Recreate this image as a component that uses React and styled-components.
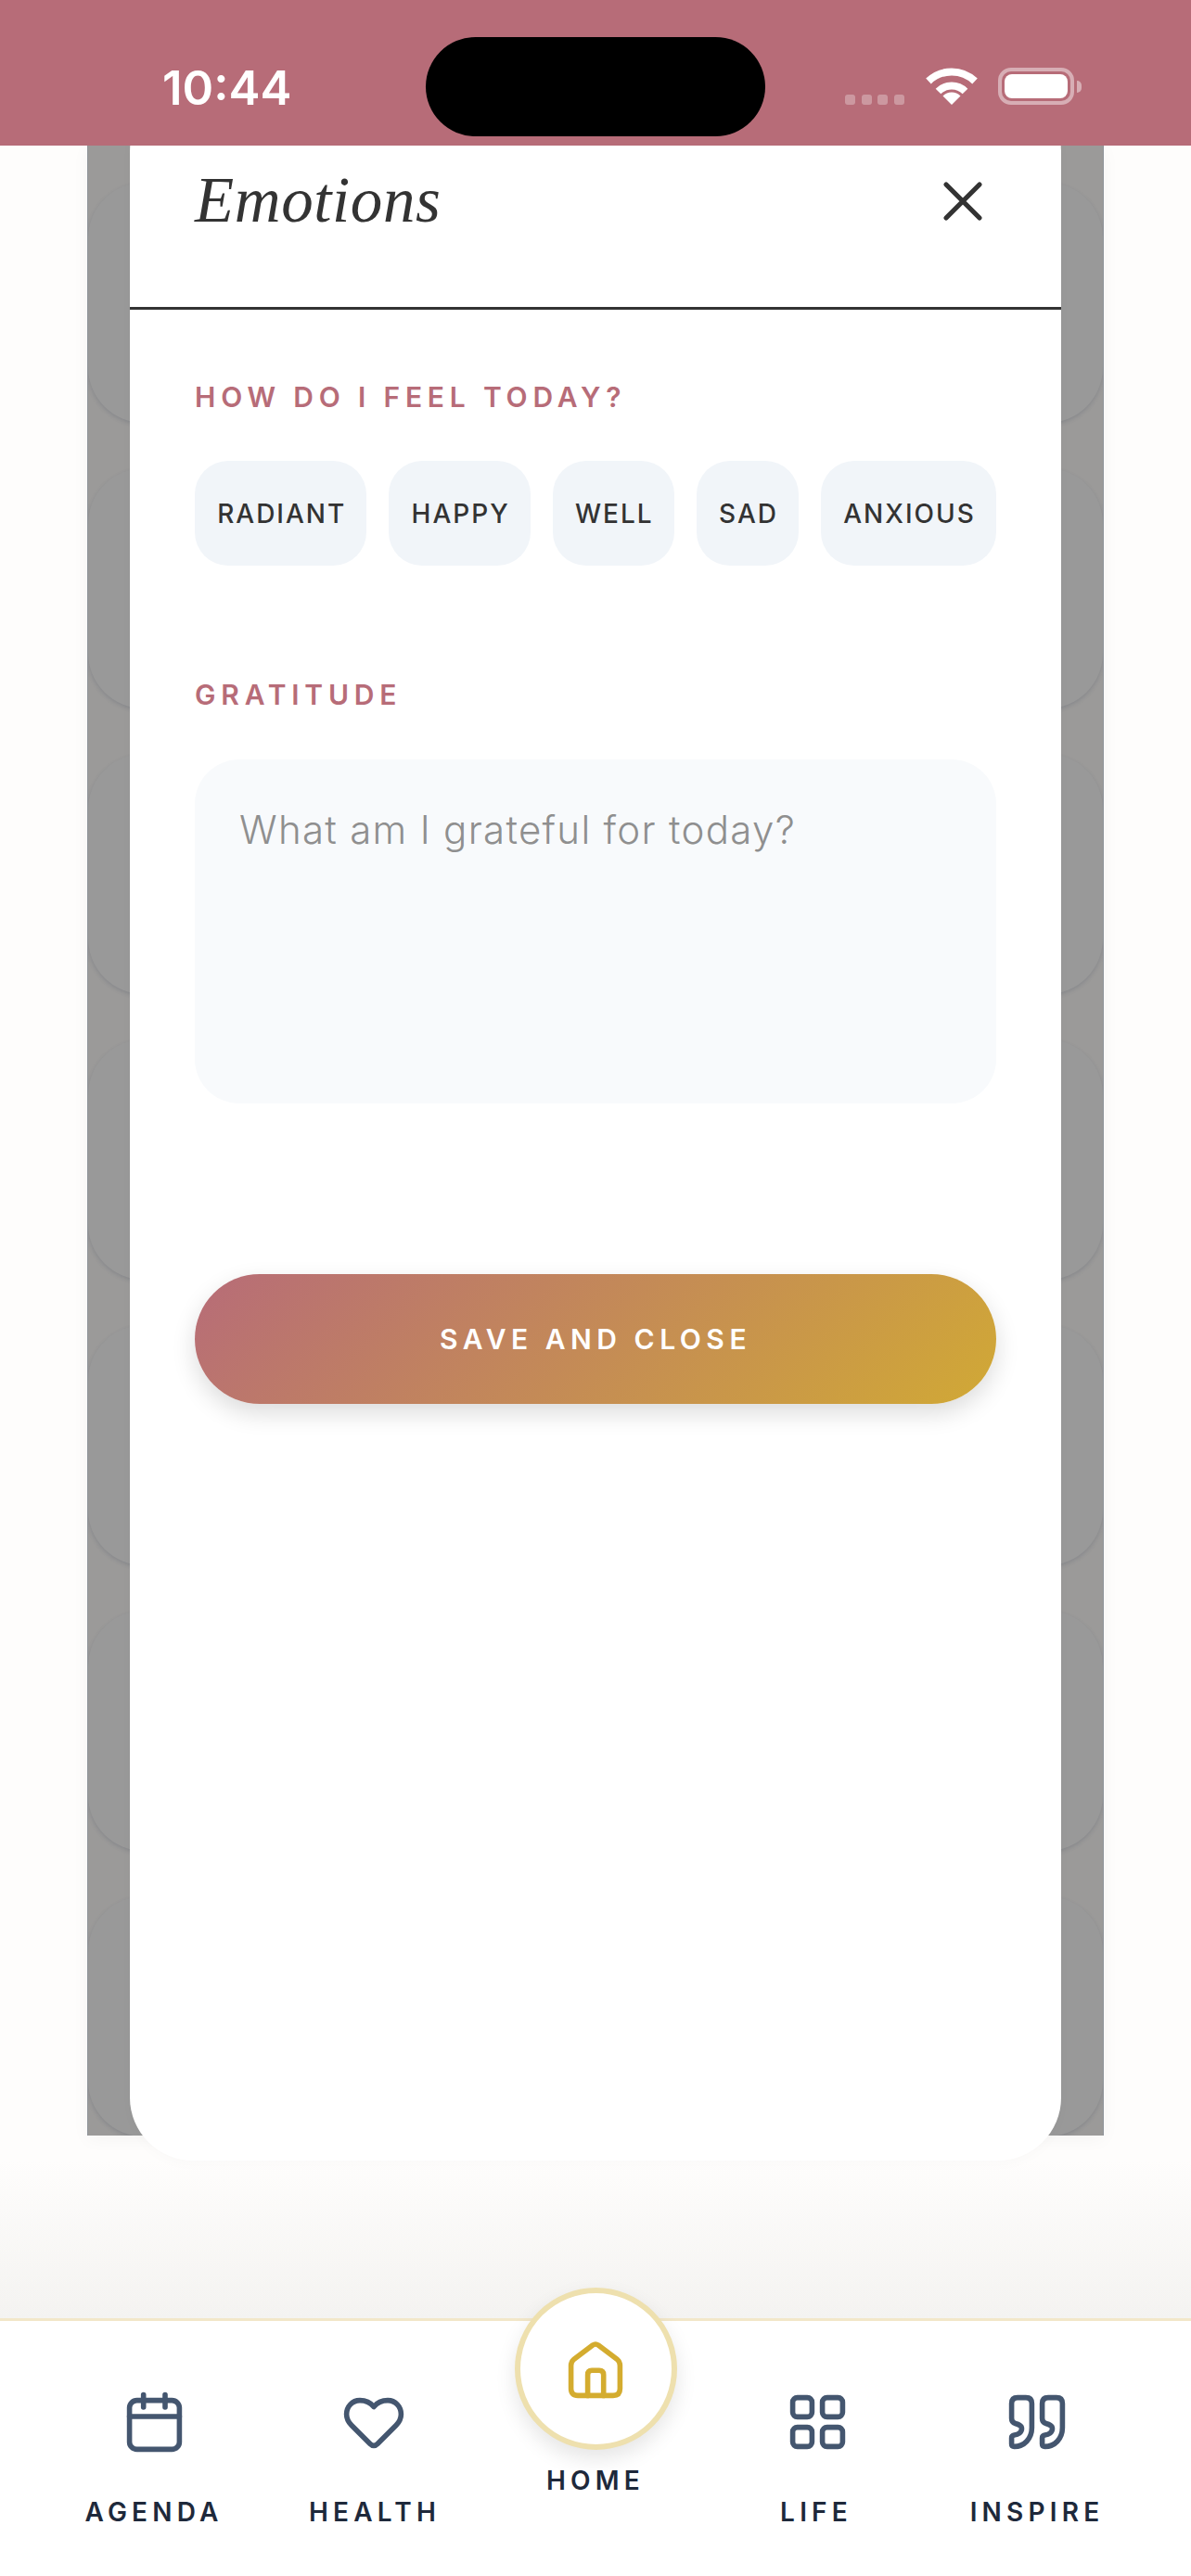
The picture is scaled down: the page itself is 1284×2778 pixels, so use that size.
import React from "react";
import styled, { createGlobalStyle } from "styled-components";

const GlobalStyle = createGlobalStyle`
  body {
    margin: 0;
    background: #fefdfc;
    font-family: "Inter", "Open Sans", sans-serif;
  }
`;

const Page = styled.div`
  width: 1284px;
  height: 2778px;
  display: flex;
  flex-direction: column;
  overflow: hidden;
`;

const StatusBar = styled.header`
  position: relative;
  z-index: 3;
  height: 157px;
  flex: none;
  background: #b76c78;
  display: grid;
  grid-template-columns: 459px 366px 1fr;
`;

const Time = styled.div`
  padding: 70px 0 0 175px;
  font-size: 51px;
  line-height: 50px;
  font-weight: 600;
  color: #fff;
`;

const Island = styled.div`
  margin-top: 40px;
  height: 107px;
  border-radius: 54px;
  background: #000;
`;

const StatusIcons = styled.div`
  padding: 73px 0 0 86px;
  display: flex;
  align-items: flex-start;
`;

const SignalDots = styled.div`
  display: flex;
  gap: 6.5px;
  margin-top: 29px;
  span {
    width: 11px;
    height: 11px;
    border-radius: 3px;
    background: rgba(255, 255, 255, 0.3);
  }
`;

const Wifi = styled.svg`
  width: 56px;
  height: 40px;
  margin: 0 22px 0 23px;
  fill: none;
  stroke: #fff;
`;

const Battery = styled.div`
  position: relative;
  box-sizing: border-box;
  width: 82px;
  height: 40px;
  padding: 3px;
  border: 4px solid rgba(255, 255, 255, 0.45);
  border-radius: 14px;
  &::after {
    content: "";
    position: absolute;
    left: 81px;
    top: 10px;
    width: 5px;
    height: 13px;
    border-radius: 0 7px 7px 0;
    background: rgba(255, 255, 255, 0.45);
  }
`;

const BatteryFill = styled.div`
  height: 100%;
  border-radius: 8px;
  background: #fff;
`;

const Content = styled.main`
  position: relative;
  flex: 1;
  padding: 0 94px;
  background: linear-gradient(to top, #f4f3f1 0, #fefdfc 170px);
`;

const Scrim = styled.div`
  box-sizing: border-box;
  height: 2146px;
  padding-top: 40px;
  display: flex;
  flex-direction: column;
  gap: 49px;
  overflow: hidden;
  background: #9b9a99;
  border-inline: 1px solid #90949a;
  box-shadow: 0 4px 18px rgba(0, 0, 0, 0.04);
`;

const BackCard = styled.div`
  flex: none;
  height: 259px;
  border-radius: 60px;
  background: #999;
  box-shadow: 0 2px 4px rgba(60, 70, 90, 0.2);
`;

const Modal = styled.section`
  position: absolute;
  top: -62px;
  left: 140px;
  width: 1004px;
  height: 2235px;
  border-radius: 68px;
  background: #fff;
  box-shadow: 0 4px 14px rgba(0, 0, 0, 0.02);
`;

const ModalHeader = styled.div`
  box-sizing: border-box;
  height: 239px;
  padding: 81px 70px 0;
  display: flex;
  justify-content: space-between;
  align-items: flex-start;
  border-bottom: 3px solid #333;
`;

const Title = styled.h1`
  margin: 0;
  font-family: "Liberation Serif", "Times New Roman", serif;
  font-style: italic;
  font-weight: 400;
  font-size: 69px;
  line-height: 80px;
  letter-spacing: 0.6px;
  color: #333;
`;

const CloseIcon = styled.svg`
  width: 72px;
  height: 72px;
  margin-top: 5px;
  fill: none;
  stroke: #333;
  stroke-width: 5.25;
  stroke-linecap: round;
`;

const ModalBody = styled.div`
  padding: 76px 70px 0;
`;

const SectionLabel = styled.h2`
  margin: 0;
  font-size: 30px;
  line-height: 36px;
  font-weight: 600;
  letter-spacing: 5.8px;
  color: #b76c78;
`;

const Chips = styled.div`
  display: flex;
  gap: 24px;
  margin: 51px 0 121px;
`;

const Chip = styled.div`
  flex: 1 1 auto;
  height: 113px;
  padding: 0 21px 0 23px;
  display: flex;
  align-items: center;
  justify-content: center;
  border-radius: 36px;
  background: #f1f5f9;
  font-size: 28px;
  font-weight: 550;
  letter-spacing: 2px;
  color: #333;
`;

const TextBox = styled.div`
  box-sizing: border-box;
  height: 371px;
  margin-top: 52px;
  padding: 51px 48px 0;
  border-radius: 48px;
  background: #f8fafc;
  font-size: 42px;
  line-height: 50px;
  font-weight: 300;
  letter-spacing: 1.3px;
  color: #8f8f8f;
`;

const SaveButton = styled.div`
  height: 140px;
  margin-top: 184px;
  display: flex;
  align-items: center;
  justify-content: center;
  border-radius: 70px;
  background: linear-gradient(135deg, #b76c78, #d1a935);
  box-shadow: 0 10px 26px rgba(0, 0, 0, 0.14);
  font-size: 30px;
  font-weight: 600;
  letter-spacing: 5.5px;
  color: #fff;
`;

const Nav = styled.nav`
  flex: none;
  box-sizing: border-box;
  height: 278px;
  padding: 0 47px;
  display: grid;
  grid-template-columns: repeat(5, 238px);
  background: #fff;
  border-top: 3px solid #f2e7c9;
`;

const NavItem = styled.div`
  display: flex;
  flex-direction: column;
  align-items: center;
  padding-top: ${(p) => (p.$raised ? 0 : "73px")};
`;

const NavIcon = styled.svg`
  width: 72px;
  height: 72px;
  fill: none;
  stroke: ${(p) => (p.$active ? "#d4ac2f" : "#44566f")};
  stroke-width: 5.6;
  stroke-linecap: round;
  stroke-linejoin: round;
`;

const HomeCircle = styled.div`
  position: relative;
  box-sizing: border-box;
  width: 175px;
  height: 175px;
  margin-top: -36px;
  display: flex;
  align-items: center;
  justify-content: center;
  border: 6px solid #eee0ae;
  border-radius: 50%;
  background: #fff;
  box-shadow: 0 10px 22px rgba(0, 0, 0, 0.1);
`;

const NavLabel = styled.span`
  margin-top: ${(p) => (p.$raised ? "19px" : "47px")};
  font-size: 28px;
  line-height: 28px;
  font-weight: 600;
  letter-spacing: 5.2px;
  color: #1e293b;
`;

const moods = ["RADIANT", "HAPPY", "WELL", "SAD", "ANXIOUS"];

function Calendar() {
  return (
    <NavIcon viewBox="0 0 72 72">
      <rect x="9.6" y="12.6" width="53.8" height="52.8" rx="8" />
      <path d="M9.6 30H63.4M24.7 6.6V20M48 6.6V20" />
    </NavIcon>
  );
}

function Heart() {
  return (
    <NavIcon viewBox="0 0 72 72">
      <path
        transform="translate(-1 0)"
        d="M36 19.5C32 14.5 26 12.6 21 12.6C12.5 12.6 6.6 19.5 6.6 27.5C6.6 32 8.5 36 12 39.5L32 59.5Q36 63.5 40 59.5L60 39.5C63.5 36 65.4 32 65.4 27.5C65.4 19.5 59.5 12.6 51 12.6C46 12.6 40 14.5 36 19.5Z"
      />
    </NavIcon>
  );
}

function Home() {
  return (
    <NavIcon $active viewBox="0 0 72 72">
      <path d="M9.6 32Q9.6 28 12.5 25.5L33 10Q36 8 39 10L59.5 25.5Q62.4 28 62.4 32V57Q62.4 64.4 55 64.4H17Q9.6 64.4 9.6 57Z" />
      <path d="M27.6 64.4V42Q27.6 37.3 32 37.3H40Q44.7 37.3 44.7 42V64.4" />
    </NavIcon>
  );
}

function Grid() {
  return (
    <NavIcon viewBox="0 0 72 72">
      <rect x="10.6" y="9.6" width="20.8" height="20.8" rx="5" />
      <rect x="42.6" y="9.6" width="21.8" height="20.8" rx="5" />
      <rect x="10.6" y="41.6" width="20.8" height="20.8" rx="5" />
      <rect x="42.6" y="41.6" width="21.8" height="20.8" rx="5" />
    </NavIcon>
  );
}

const quoteMark =
  "M15 9.6H24Q30.4 9.6 30.4 16V42C30.4 54 22 62.4 11.5 62.4Q8.6 62.4 8.6 59.5V53Q8.6 50.5 11.5 50C16 49.5 19.5 47 19.5 43C19.5 39.5 16 38.5 12.5 37.5C10 36.8 8.6 35 8.6 32V16Q8.6 9.6 15 9.6Z";

function Quote() {
  return (
    <NavIcon viewBox="0 0 72 72">
      <path d={quoteMark} />
      <path d={quoteMark} transform="translate(33 0)" />
    </NavIcon>
  );
}

export default function App() {
  return (
    <>
      <GlobalStyle />
      <Page>
        <StatusBar>
          <Time>10:44</Time>
          <Island />
          <StatusIcons>
            <SignalDots>
              <span />
              <span />
              <span />
              <span />
            </SignalDots>
            <Wifi viewBox="0 0 56 40">
              <path d="M3 14.5A36 36 0 0 1 53 14.5" strokeWidth="8" />
              <path d="M13.5 25.5A20.5 20.5 0 0 1 42.5 25.5" strokeWidth="8" />
              <path d="M28 40L18.5 30.5A13.5 13.5 0 0 1 37.5 30.5Z" fill="#fff" stroke="none" />
            </Wifi>
            <Battery>
              <BatteryFill />
            </Battery>
          </StatusIcons>
        </StatusBar>

        <Content>
          <Scrim>
            {Array.from({ length: 7 }, (_, i) => (
              <BackCard key={i} />
            ))}
          </Scrim>
          <Modal>
            <ModalHeader>
              <Title>Emotions</Title>
              <CloseIcon viewBox="0 0 72 72">
                <path d="M18 18L54 54M54 18L18 54" />
              </CloseIcon>
            </ModalHeader>
            <ModalBody>
              <SectionLabel>HOW DO I FEEL TODAY?</SectionLabel>
              <Chips>
                {moods.map((m) => (
                  <Chip key={m}>{m}</Chip>
                ))}
              </Chips>
              <SectionLabel>GRATITUDE</SectionLabel>
              <TextBox>What am I grateful for today?</TextBox>
              <SaveButton>SAVE AND CLOSE</SaveButton>
            </ModalBody>
          </Modal>
        </Content>

        <Nav>
          <NavItem>
            <Calendar />
            <NavLabel>AGENDA</NavLabel>
          </NavItem>
          <NavItem>
            <Heart />
            <NavLabel>HEALTH</NavLabel>
          </NavItem>
          <NavItem $raised>
            <HomeCircle>
              <Home />
            </HomeCircle>
            <NavLabel $raised>HOME</NavLabel>
          </NavItem>
          <NavItem>
            <Grid />
            <NavLabel>LIFE</NavLabel>
          </NavItem>
          <NavItem>
            <Quote />
            <NavLabel>INSPIRE</NavLabel>
          </NavItem>
        </Nav>
      </Page>
    </>
  );
}
